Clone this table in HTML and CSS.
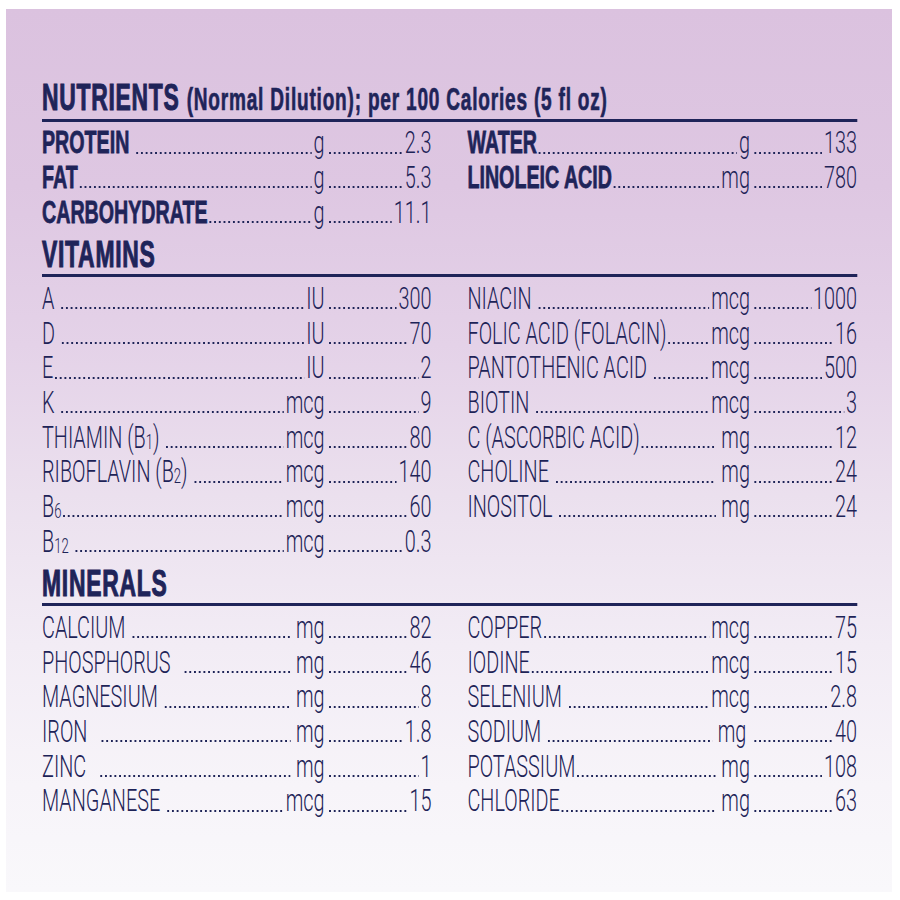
FILE: index.html
```html
<!DOCTYPE html>
<html lang="en">
<head>
<meta charset="utf-8">
<title>Nutrients</title>
<link rel="stylesheet" href="styles.css">
</head>
<body>
<div class="panel">
  <div class="sheet">
    <section class="section">
      <h2 class="heading">NUTRIENTS <span class="heading-note">(Normal Dilution); per 100 Calories (5 fl oz)</span></h2>
      <div class="grid">
        <div class="col">
          <div class="row"><span class="label b gap">PROTEIN</span><span class="dots"></span><span class="unit">g</span><span class="tail"><span class="dots"></span><span class="val">2.3</span></span></div>
          <div class="row"><span class="label b">FAT</span><span class="dots"></span><span class="unit">g</span><span class="tail"><span class="dots"></span><span class="val">5.3</span></span></div>
          <div class="row"><span class="label b">CARBOHYDRATE</span><span class="dots"></span><span class="unit">g</span><span class="tail"><span class="dots"></span><span class="val">11.1</span></span></div>
        </div>
        <div class="col">
          <div class="row"><span class="label b">WATER</span><span class="dots"></span><span class="unit">g</span><span class="tail"><span class="dots"></span><span class="val">133</span></span></div>
          <div class="row"><span class="label b">LINOLEIC ACID</span><span class="dots"></span><span class="unit">mg</span><span class="tail"><span class="dots"></span><span class="val">780</span></span></div>
        </div>
      </div>
    </section>

    <section class="section">
      <h2 class="heading">VITAMINS</h2>
      <div class="grid">
        <div class="col">
          <div class="row"><span class="label gap">A</span><span class="dots"></span><span class="unit">IU</span><span class="tail"><span class="dots"></span><span class="val">300</span></span></div>
          <div class="row"><span class="label gap">D</span><span class="dots"></span><span class="unit">IU</span><span class="tail"><span class="dots"></span><span class="val">70</span></span></div>
          <div class="row"><span class="label">E</span><span class="dots"></span><span class="unit">IU</span><span class="tail"><span class="dots"></span><span class="val">2</span></span></div>
          <div class="row"><span class="label gap">K</span><span class="dots"></span><span class="unit">mcg</span><span class="tail"><span class="dots"></span><span class="val">9</span></span></div>
          <div class="row"><span class="label gap">THIAMIN (B<sub class="sub">1</sub>)</span><span class="dots"></span><span class="unit">mcg</span><span class="tail"><span class="dots"></span><span class="val">80</span></span></div>
          <div class="row"><span class="label gap">RIBOFLAVIN (B<sub class="sub">2</sub>)</span><span class="dots"></span><span class="unit">mcg</span><span class="tail"><span class="dots"></span><span class="val">140</span></span></div>
          <div class="row"><span class="label">B<sub class="sub">6</sub></span><span class="dots"></span><span class="unit">mcg</span><span class="tail"><span class="dots"></span><span class="val">60</span></span></div>
          <div class="row"><span class="label gap">B<sub class="sub">12</sub></span><span class="dots"></span><span class="unit">mcg</span><span class="tail"><span class="dots"></span><span class="val">0.3</span></span></div>
        </div>
        <div class="col">
          <div class="row"><span class="label gap">NIACIN</span><span class="dots"></span><span class="unit">mcg</span><span class="tail"><span class="dots"></span><span class="val">1000</span></span></div>
          <div class="row"><span class="label">FOLIC ACID (FOLACIN)</span><span class="dots"></span><span class="unit">mcg</span><span class="tail"><span class="dots"></span><span class="val">16</span></span></div>
          <div class="row"><span class="label gap">PANTOTHENIC ACID</span><span class="dots"></span><span class="unit">mcg</span><span class="tail"><span class="dots"></span><span class="val">500</span></span></div>
          <div class="row"><span class="label gap">BIOTIN</span><span class="dots"></span><span class="unit">mcg</span><span class="tail"><span class="dots"></span><span class="val">3</span></span></div>
          <div class="row"><span class="label">C (ASCORBIC ACID)</span><span class="dots"></span><span class="unit pre">mg</span><span class="tail"><span class="dots"></span><span class="val">12</span></span></div>
          <div class="row"><span class="label gap">CHOLINE</span><span class="dots"></span><span class="unit pre">mg</span><span class="tail"><span class="dots"></span><span class="val">24</span></span></div>
          <div class="row"><span class="label gap">INOSITOL</span><span class="dots"></span><span class="unit pre">mg</span><span class="tail"><span class="dots"></span><span class="val">24</span></span></div>
        </div>
      </div>
    </section>

    <section class="section">
      <h2 class="heading">MINERALS</h2>
      <div class="grid">
        <div class="col">
          <div class="row"><span class="label gap">CALCIUM</span><span class="dots"></span><span class="unit pre">mg</span><span class="tail"><span class="dots"></span><span class="val">82</span></span></div>
          <div class="row"><span class="label gap2">PHOSPHORUS</span><span class="dots"></span><span class="unit pre">mg</span><span class="tail"><span class="dots"></span><span class="val">46</span></span></div>
          <div class="row"><span class="label gap">MAGNESIUM</span><span class="dots"></span><span class="unit pre">mg</span><span class="tail"><span class="dots"></span><span class="val">8</span></span></div>
          <div class="row"><span class="label gap2">IRON</span><span class="dots"></span><span class="unit pre">mg</span><span class="tail"><span class="dots"></span><span class="val">1.8</span></span></div>
          <div class="row"><span class="label gap2">ZINC</span><span class="dots"></span><span class="unit pre">mg</span><span class="tail"><span class="dots"></span><span class="val">1</span></span></div>
          <div class="row"><span class="label gap">MANGANESE</span><span class="dots"></span><span class="unit">mcg</span><span class="tail"><span class="dots"></span><span class="val">15</span></span></div>
        </div>
        <div class="col">
          <div class="row"><span class="label">COPPER</span><span class="dots"></span><span class="unit">mcg</span><span class="tail"><span class="dots"></span><span class="val">75</span></span></div>
          <div class="row"><span class="label">IODINE</span><span class="dots"></span><span class="unit">mcg</span><span class="tail"><span class="dots"></span><span class="val">15</span></span></div>
          <div class="row"><span class="label gap">SELENIUM</span><span class="dots"></span><span class="unit">mcg</span><span class="tail"><span class="dots"></span><span class="val">2.8</span></span></div>
          <div class="row"><span class="label gap">SODIUM</span><span class="dots"></span><span class="unit pre post">mg</span><span class="tail"><span class="dots"></span><span class="val">40</span></span></div>
          <div class="row"><span class="label">POTASSIUM</span><span class="dots"></span><span class="unit pre">mg</span><span class="tail"><span class="dots"></span><span class="val">108</span></span></div>
          <div class="row"><span class="label">CHLORIDE</span><span class="dots"></span><span class="unit pre">mg</span><span class="tail"><span class="dots"></span><span class="val">63</span></span></div>
        </div>
      </div>
    </section>
  </div>
</div>
</body>
</html>
```

FILE: styles.css
```css
* {
  box-sizing: border-box;
}

html,
body {
  margin: 0;
  padding: 0;
  background: #ffffff;
}

.panel {
  margin: 9px 8px 8px 6px;
  height: 883px;
  padding: 68.8px 35px 0 36px;
  overflow: hidden;
  background: linear-gradient(180deg,
    #dbc2df 0%,
    #dec7e2 20%,
    #e4d2e8 38%,
    #ebe0ee 55%,
    #f2ecf5 72%,
    #f7f4f9 88%,
    #f9f8fb 100%);
}

/* Condensed type: the whole sheet is laid out wide and squeezed horizontally */
.sheet {
  width: 1314.5px;
  transform: scaleX(0.62);
  transform-origin: 0 0;
  color: #1d2357;
}

.section + .section {
  margin-top: 6px;
}

.heading {
  margin: 0;
  font-family: "Liberation Sans", Arial, sans-serif;
  font-weight: 700;
  font-size: 36.9px;
  line-height: 39px;
  letter-spacing: 1.2px;
  white-space: nowrap;
  border-bottom: 3px solid #1f2459;
  color: #1f2459;
  -webkit-text-stroke: 1.1px #1f2459;
}

.heading-note {
  font-size: 30.7px;
  letter-spacing: 1.3px;
  -webkit-text-stroke: 0.7px #1f2459;
}

.grid {
  display: grid;
  grid-template-columns: 1fr 1fr;
  column-gap: 58px;
  margin-top: 3.5px;
}

.col {
  display: flex;
  flex-direction: column;
}

.row {
  display: flex;
  height: 34.7px;
  font-family: Roboto, "Liberation Sans", sans-serif;
  font-weight: 300;
  font-size: 32px;
  line-height: 34.7px;
  white-space: nowrap;
}

.label {
  flex: none;
}

.label.b {
  font-family: "Liberation Sans", Arial, sans-serif;
  font-weight: 700;
  font-size: 31.7px;
  color: #1f2459;
  -webkit-text-stroke: 0.8px #1f2459;
}

.label.gap {
  padding-right: 8px;
}

.label.gap2 {
  padding-right: 20px;
}

.sub {
  font-size: 0.66em;
  line-height: 0;
  vertical-align: -0.05em;
}

.dots {
  flex: 1 1 auto;
  min-width: 0;
  margin: 0 3px 0 2px;
  background-image: linear-gradient(to right, currentColor 0 2.3px, transparent 2.3px);
  background-size: 7.6px 2px;
  background-repeat: repeat-x;
  background-position: 1px 26.4px;
}

.unit {
  flex: none;
}

.unit.pre {
  padding-left: 6px;
}

.unit.post {
  padding-right: 6px;
}

.tail {
  flex: none;
  width: 172.6px;
  display: flex;
}

.tail .dots {
  margin-left: 6px;
}

.val {
  flex: none;
}
```
